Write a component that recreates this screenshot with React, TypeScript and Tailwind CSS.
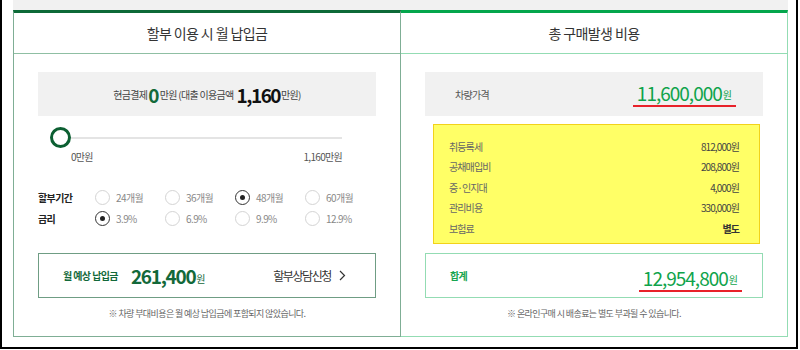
const font = "font-['Noto_Sans_CJK_KR','Noto_Sans',sans-serif]"

function Radio({ checked, label }: { checked?: boolean; label: string }) {
  return (
    <div className="flex w-[70px] items-center gap-[6px]">
      <span
        className={`flex h-[15px] w-[15px] items-center justify-center rounded-full border ${
          checked ? 'border-[#333]' : 'border-[#d4d4d4]'
        }`}
      >
        {checked && <span className="h-[5px] w-[5px] rounded-full bg-[#222]" />}
      </span>
      <span className="text-[10px] tracking-[-0.6px] text-[#888]">{label}</span>
    </div>
  )
}

function Row({ name, value, bold }: { name: string; value: string; bold?: boolean }) {
  return (
    <div className="flex h-[20.5px] items-center justify-between text-[10px] tracking-[-0.9px]">
      <span className="text-[#666]">{name}</span>
      <span className={bold ? 'font-bold text-[#333]' : 'text-[#444]'}>{value}</span>
    </div>
  )
}

export default function App() {
  return (
    <div className={`h-[350px] w-[800px] overflow-hidden bg-white ${font}`}>
      <div className="h-[349px] w-[798px] border-x-2 border-b-2 border-black pl-[11px]">
        <div className="h-[10px] w-[775px] bg-[#f1f1f1]" />
        <div className="flex w-[775px]">
          {/* left panel */}
          <section className="flex h-[327px] w-[388px] flex-col border-x border-b border-t-[3px] border-x-[#7fae95] border-b-[#7fae95] border-t-[#0d6a38]">
            <div className="flex h-[41px] items-center justify-center border-b border-[#8fbfa3] text-[14px] tracking-[-0.6px] text-[#333]">
              할부 이용 시 월 납입금
            </div>
            <div className="flex flex-col px-[24px] pt-[18px]">
              <div className="flex h-[44px] items-center justify-center bg-[#f1f1f1] text-[10px] tracking-[-0.7px] text-[#444]">
                <span>현금결제</span>
                <span className="mx-[1px] text-[19px] leading-none font-bold text-[#13693a]">0</span>
                <span>만원 (대출 이용금액</span>
                <span className="ml-[3px] text-[19px] leading-none font-bold tracking-[-1.5px] text-[#111]">1,160</span>
                <span className="ml-[1px]">만원)</span>
              </div>
              <div className="mt-[11px] mr-[34px] ml-[12px] flex items-center">
                <span className="h-[21px] w-[21px] rounded-full border-[3px] border-[#0c5f32] bg-white" />
                <span className="h-[2px] flex-1 bg-[#e4e4e4]" />
              </div>
              <div className="mt-[1px] mr-[34px] ml-[33px] flex h-[15px] items-center justify-between text-[10px] tracking-[-0.7px] text-[#555]">
                <span>0만원</span>
                <span>1,160만원</span>
              </div>
              <div className="mt-[22.5px] flex h-[21px] items-center">
                <span className="w-[57px] text-[10px] font-bold tracking-[-0.6px] text-[#222]">할부기간</span>
                <Radio label="24개월" />
                <Radio label="36개월" />
                <Radio checked label="48개월" />
                <Radio label="60개월" />
              </div>
              <div className="flex h-[21px] items-center">
                <span className="w-[57px] text-[10px] font-bold tracking-[-0.6px] text-[#222]">금리</span>
                <Radio checked label="3.9%" />
                <Radio label="6.9%" />
                <Radio label="9.9%" />
                <Radio label="12.9%" />
              </div>
              <div className="mt-[24.5px] flex h-[45px] items-center border border-[#6f9d84] pr-[29px] pl-[24px]">
                <span className="text-[10px] font-bold tracking-[-0.6px] text-[#13693a]">월 예상 납입금</span>
                <span className="ml-[13px] text-[19px] leading-none font-bold tracking-[-1.3px] text-[#13693a]">261,400</span>
                <span className="mt-[6px] ml-[1px] text-[10px] text-[#13693a]">원</span>
                <span className="ml-auto flex items-center gap-[8px] text-[12px] tracking-[-1.4px] text-[#333]">
                  할부상담신청
                  <svg width="7" height="11" viewBox="0 0 7 11" fill="none">
                    <path d="M1 1l4.5 4.5L1 10" stroke="#333" strokeWidth="1.2" />
                  </svg>
                </span>
              </div>
              <p className="mt-[9px] text-center text-[9px] tracking-[-0.6px] text-[#666]">
                ※ 차량 부대비용은 월 예상 납입금에 포함되지 않았습니다.
              </p>
            </div>
          </section>

          {/* right panel */}
          <section className="flex h-[327px] w-[387px] flex-col border-r border-b border-t-[3px] border-r-[#93dcb3] border-b-[#93dcb3] border-t-[#03a64c]">
            <div className="flex h-[41px] items-center justify-center border-b border-[#93dcb3] text-[14px] tracking-[-0.6px] text-[#333]">
              총 구매발생 비용
            </div>
            <div className="flex flex-col pt-[18px] pr-[24px] pl-[24px]">
              <div className="flex h-[44px] items-center justify-between bg-[#f1f1f1] pr-[27px] pl-[30px]">
                <span className="text-[10px] tracking-[-0.7px] text-[#555]">차량가격</span>
                <span className="flex items-end border-b-2 border-[#e8222a] px-[4px] pb-[1px]">
                  <span className="text-[19px] leading-[23px] tracking-[-1px] text-[#0fa34b]">11,600,000</span>
                  <span className="mb-[2px] ml-[1px] text-[10px] text-[#0fa34b]">원</span>
                </span>
              </div>
              <div className="mt-[8px] mr-[3px] ml-[8px] h-[120px] border border-[#f2d21a] bg-[#ffff66] pt-[11px] pr-[20px] pl-[15px]">
                <Row name="취등록세" value="812,000원" />
                <Row name="공채매입비" value="208,800원" />
                <Row name="증·인지대" value="4,000원" />
                <Row name="관리비용" value="330,000원" />
                <Row name="보험료" value="별도" bold />
              </div>
              <div className="mt-[9px] flex h-[45px] items-center justify-between border border-[#93dcb3] pr-[20px] pl-[24px]">
                <span className="text-[10px] font-bold tracking-[-0.6px] text-[#18a550]">합계</span>
                <span className="mt-[6px] flex items-end border-b-2 border-[#e8222a] px-[4px] pb-[1px]">
                  <span className="text-[19px] leading-[23px] tracking-[-1px] text-[#0fa34b]">12,954,800</span>
                  <span className="mb-[2px] ml-[1px] text-[10px] text-[#0fa34b]">원</span>
                </span>
              </div>
              <p className="mt-[9px] text-center text-[9px] tracking-[-0.6px] text-[#666]">
                ※ 온라인구매 시 배송료는 별도 부과될 수 있습니다.
              </p>
            </div>
          </section>
        </div>
      </div>
    </div>
  )
}
